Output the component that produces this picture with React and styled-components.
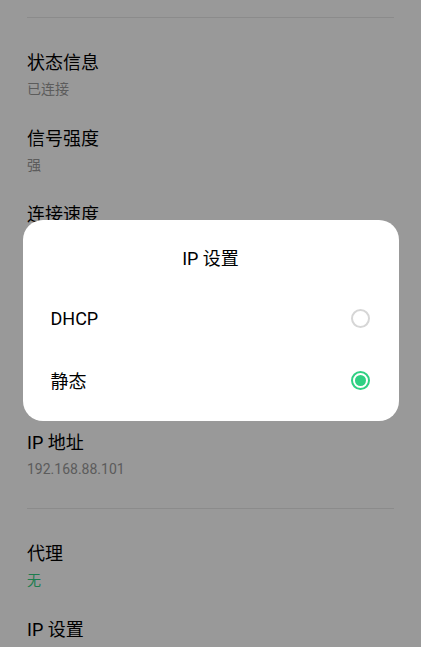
import React, { useState } from 'react'
import styled, { createGlobalStyle } from 'styled-components'

const green = '#2fd083'

const GlobalStyle = createGlobalStyle`
	html, body {
		margin: 0;
		padding: 0;
		background: #fff;
		font-family: Roboto, "Noto Sans CJK SC", sans-serif;
	}
`

const Page = styled.div`
	width: 421px;
	height: 647px;
	overflow: hidden;
	position: relative;
	padding: 17px 27px 0;
	box-sizing: border-box;
	background: #fff;
`

const Section = styled.div`
	border-top: 1px solid #e8e8e8;
	padding: 19px 0 15px;
`

const Item = styled.div`
	padding: 14px 0 15px;
	display: flex;
	flex-direction: column;
	gap: 5px;
`

const Title = styled.div`
	font-size: 18px;
	line-height: 24px;
	color: #000;
`

const Sub = styled.div`
	font-size: 14px;
	line-height: 18px;
	color: ${p => (p.$accent ? green : '#999')};
`

const Overlay = styled.div`
	position: absolute;
	inset: 0;
	background: rgba(0, 0, 0, 0.4);
	display: flex;
	justify-content: center;
	align-items: flex-start;
	padding-top: 220px;
`

const Dialog = styled.div`
	width: 376px;
	height: 201px;
	background: #fff;
	border-radius: 20px;
	box-sizing: border-box;
	padding: 27px 28px 0;
`

const DialogTitle = styled.div`
	text-align: center;
	font-size: 18px;
	line-height: 24px;
	color: #000;
	margin-bottom: 16px;
`

const Option = styled.div`
	height: 62px;
	display: flex;
	align-items: center;
	justify-content: space-between;
	font-size: 18px;
	color: #000;
	cursor: pointer;
`

const Radio = styled.span`
	width: 19px;
	height: 19px;
	border-radius: 50%;
	box-sizing: border-box;
	border: 2px solid ${p => (p.$on ? green : '#d6d6d6')};
	display: flex;
	align-items: center;
	justify-content: center;
	margin-right: 1px;

	&::after {
		content: '';
		width: 11px;
		height: 11px;
		border-radius: 50%;
		background: ${p => (p.$on ? green : 'transparent')};
	}
`

const groups = [
	[
		['状态信息', '已连接'],
		['信号强度', '强'],
		['连接速度', '433 Mbps'],
		['频率', '5 GHz'],
		['加密方式', 'WPA2 PSK'],
		['IP 地址', '192.168.88.101'],
	],
	[
		['代理', '无', true],
		['IP 设置', '静态'],
	],
]

const App = () => {
	const [mode, setMode] = useState('static')

	return (
		<>
			<GlobalStyle />
			<Page>
				{groups.map((group, i) => (
					<Section key={i}>
						{group.map(([title, sub, accent]) => (
							<Item key={title}>
								<Title>{title}</Title>
								<Sub $accent={accent}>{sub}</Sub>
							</Item>
						))}
					</Section>
				))}
				<Overlay>
					<Dialog>
						<DialogTitle>IP 设置</DialogTitle>
						<Option onClick={() => setMode('dhcp')}>
							DHCP
							<Radio $on={mode === 'dhcp'} />
						</Option>
						<Option onClick={() => setMode('static')}>
							静态
							<Radio $on={mode === 'static'} />
						</Option>
					</Dialog>
				</Overlay>
			</Page>
		</>
	)
}

export default App
